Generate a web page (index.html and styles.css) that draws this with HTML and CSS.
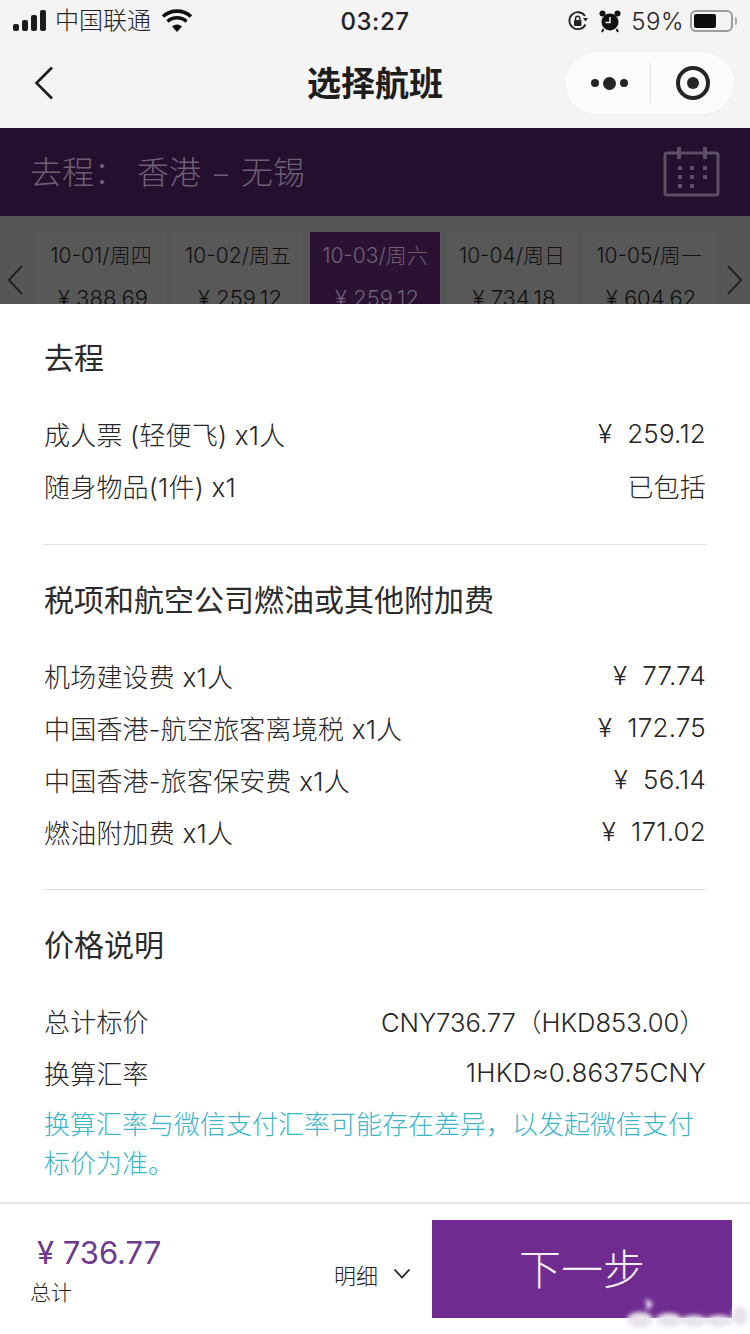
FILE: index.html
```html
<!DOCTYPE html>
<html lang="zh-CN">
<head>
<meta charset="utf-8">
<title>选择航班</title>
<link rel="stylesheet" href="styles.css">
</head>
<body>
<div class="app">
  <div class="top">
    <div class="status">
      <div class="status-left">
        <svg class="signal" width="34" height="22" viewBox="0 0 34 22"><rect x="0" y="14" width="6" height="7" rx="2"/><rect x="9" y="10" width="6" height="11" rx="2"/><rect x="18" y="5" width="6" height="16" rx="2"/><rect x="27" y="0" width="6" height="21" rx="2"/></svg>
        <span class="carrier">中国联通</span>
        <svg class="wifi" width="32" height="24" viewBox="0 0 32 24"><path d="M16 23 11 17.5a7.5 7.5 0 0 1 10 0Z" fill="#111"/><path d="M6.5 12.5a14 14 0 0 1 19 0M2 7.5a21 21 0 0 1 28 0" fill="none" stroke="#111" stroke-width="3.6"/></svg>
      </div>
      <div class="clock">03:27</div>
      <div class="status-right">
        <svg width="22" height="22" viewBox="0 0 22 22"><path d="M18.5 14.5A8.5 8.5 0 1 1 18 6" fill="none" stroke="#222" stroke-width="1.8"/><path d="M16 8h5l-2.5 3.4Z" fill="#222"/><rect x="7" y="10" width="7.5" height="6" rx="1" fill="#222"/><path d="M8.5 10V8.4a2.2 2.2 0 0 1 4.4 0V10" fill="none" stroke="#222" stroke-width="1.4"/></svg>
        <svg width="22" height="24" viewBox="0 0 22 24"><circle cx="11" cy="13" r="8.5" fill="#111"/><circle cx="3.5" cy="4.5" r="3" fill="#111"/><circle cx="18.5" cy="4.5" r="3" fill="#111"/><path d="M11 8v5.500H6.500" fill="none" stroke="#f4f4f4" stroke-width="1.5"/><path d="M4.500 20 3 23M17.500 20 19 23" stroke="#111" stroke-width="1.8"/></svg>
        <span class="percent">59%</span>
        <span class="battery"><span class="battery-fill"></span></span>
        <span class="battery-tip"></span>
      </div>
    </div>
    <div class="nav">
      <svg class="back" width="20" height="34" viewBox="0 0 20 34"><path d="M18 1.500 2.500 17 18 32.500" fill="none" stroke="#1c1c1c" stroke-width="2.600"/></svg>
      <h1 class="nav-title">选择航班</h1>
      <div class="capsule">
        <div class="capsule-more"><i class="dot"></i><i class="dot dot-big"></i><i class="dot"></i></div>
        <div class="capsule-line"></div>
        <div class="capsule-target"><i class="target-core"></i></div>
      </div>
    </div>
  </div>

  <div class="route">
    <div class="route-text"><span>去程：</span><span class="route-cities">香港</span><span class="route-dash">–</span><span>无锡</span></div>
    <svg width="58" height="52" viewBox="0 0 58 52" class="calendar"><rect x="2" y="7" width="53" height="42" rx="2" fill="none" stroke="#5d4f63" stroke-width="3"/><path d="M16 1v12M42 1v12" stroke="#5d4f63" stroke-width="4"/><g fill="#5d4f63"><rect x="15" y="20" width="4" height="4"/><rect x="27" y="20" width="4" height="4"/><rect x="40" y="20" width="4" height="4"/><rect x="15" y="29" width="4" height="4"/><rect x="27" y="29" width="4" height="4"/><rect x="40" y="29" width="4" height="4"/><rect x="15" y="38" width="4" height="4"/><rect x="27" y="38" width="4" height="4"/></g></svg>
  </div>

  <div class="dates">
    <svg class="date-arrow" width="16" height="30" viewBox="0 0 16 30"><path d="M15 1 2 15l13 14" fill="none" stroke="#1a1a1a" stroke-width="1.800"/></svg>
    <div class="date-list">
      <div class="date"><div class="date-day">10-01/周四</div><div class="date-price">¥ 388.69</div></div>
      <div class="date"><div class="date-day">10-02/周五</div><div class="date-price">¥ 259.12</div></div>
      <div class="date date-active"><div class="date-day">10-03/周六</div><div class="date-price">¥ 259.12</div></div>
      <div class="date"><div class="date-day">10-04/周日</div><div class="date-price">¥ 734.18</div></div>
      <div class="date"><div class="date-day">10-05/周一</div><div class="date-price">¥ 604.62</div></div>
    </div>
    <svg class="date-arrow" width="16" height="30" viewBox="0 0 16 30"><path d="M1 1l13 14L1 29" fill="none" stroke="#1a1a1a" stroke-width="1.800"/></svg>
  </div>

  <div class="sheet">
    <section class="group group-first">
      <h2 class="group-title">去程</h2>
      <div class="rows">
        <div class="row"><span>成人票 (轻便飞) x1人</span><span>¥&nbsp;&nbsp;259.12</span></div>
        <div class="row"><span>随身物品(1件) x1</span><span>已包括</span></div>
      </div>
    </section>
    <section class="group">
      <h2 class="group-title">税项和航空公司燃油或其他附加费</h2>
      <div class="rows">
        <div class="row"><span>机场建设费 x1人</span><span>¥&nbsp;&nbsp;77.74</span></div>
        <div class="row"><span>中国香港-航空旅客离境税 x1人</span><span>¥&nbsp;&nbsp;172.75</span></div>
        <div class="row"><span>中国香港-旅客保安费 x1人</span><span>¥&nbsp;&nbsp;56.14</span></div>
        <div class="row"><span>燃油附加费 x1人</span><span>¥&nbsp;&nbsp;171.02</span></div>
      </div>
    </section>
    <section class="group group-last">
      <h2 class="group-title">价格说明</h2>
      <div class="rows">
        <div class="row"><span>总计标价</span><span class="row-cny">CNY736.77（HKD853.00）</span></div>
        <div class="row"><span>换算汇率</span><span>1HKD≈0.86375CNY</span></div>
      </div>
      <p class="note">换算汇率与微信支付汇率可能存在差异，以发起微信支付标价为准。</p>
    </section>
  </div>

  <div class="footer">
    <div class="total">
      <div class="total-price">¥ 736.77</div>
      <div class="total-label">总计</div>
    </div>
    <div class="detail">
      <span>明细</span>
      <svg width="18" height="12" viewBox="0 0 18 12"><path d="M1.500 1.500 9 9.500l7.500-8" fill="none" stroke="#222" stroke-width="1.800"/></svg>
    </div>
    <div class="next">下一步</div>
  </div>
  <svg class="watermark" width="130" height="40" viewBox="0 0 130 40"><defs><filter id="soft"><feGaussianBlur stdDeviation="2.200"/></filter></defs><g fill="#e9e4ec" filter="url(#soft)"><ellipse cx="18" cy="25" rx="13" ry="8"/><path d="M24 3l7 6-6 7Z" fill="#f5e9f6"/><ellipse cx="47" cy="25" rx="13" ry="7"/><ellipse cx="72" cy="26" rx="13" ry="6"/><ellipse cx="97" cy="26" rx="13" ry="6"/><ellipse cx="118" cy="21" rx="8" ry="10"/></g></svg>
</div>
</body>
</html>
```
FILE: styles.css
```css
* { box-sizing: border-box; }
html, body { margin: 0; padding: 0; background: #fff; }
body { font-family: "Inter", "Noto Sans CJK SC", sans-serif; color: #262626; }
h1, h2, p { margin: 0; }
.app { position: relative; width: 750px; height: 1334px; overflow: hidden; display: flex; flex-direction: column; }

.top { height: 128px; background: #f4f4f4; }
.status { height: 42px; padding: 0 13px; display: flex; align-items: center; justify-content: space-between; position: relative; font-size: 24px; color: #222; }
.status-left { display: flex; align-items: center; }
.signal { fill: #1c1c1c; }
.carrier { margin: -5px 0 0 8px; font-family: "Noto Sans CJK SC", sans-serif; font-size: 24px; font-weight: 300; }
.wifi { margin-left: 10px; }
.clock { position: absolute; left: 0; right: 0; text-align: center; font-size: 24px; font-weight: 500; letter-spacing: 0.5px; pointer-events: none; }
.status-right { display: flex; align-items: center; gap: 10px; padding-right: 0; }
.percent { font-size: 24px; font-weight: 300; letter-spacing: 0.5px; }
.battery { width: 43px; height: 22px; margin-left: -4px; border: 2px solid #9b9b9b; border-radius: 6px; padding: 2px; display: flex; }
.battery-fill { width: 22px; background: #0d0d0d; border-radius: 2px; }
.battery-tip { width: 2px; height: 8px; margin-left: -8px; background: #aaa; border-radius: 0 2px 2px 0; }

.nav { height: 86px; position: relative; display: flex; align-items: center; justify-content: space-between; padding: 0 15px 4px 34px; }
.nav-title { position: absolute; left: 0; right: 0; top: 17px; text-align: center; font-family: "Noto Sans CJK SC", sans-serif; font-size: 34px; line-height: 46px; font-weight: 700; color: #1d1d1d; pointer-events: none; }
.capsule { width: 171px; height: 64px; border-radius: 32px; background: #fbfbfb; border: 1px solid #efefef; display: flex; align-items: center; }
.capsule-more { width: 85px; display: flex; justify-content: center; align-items: center; gap: 4px; padding-left: 3px; }
.dot { width: 8px; height: 8px; border-radius: 50%; background: #242424; }
.dot-big { width: 13px; height: 13px; }
.capsule-line { width: 1px; height: 40px; background: #e4e4e4; }
.capsule-target { width: 34px; height: 34px; margin-left: 25px; border: 4px solid #242424; border-radius: 50%; display: flex; align-items: center; justify-content: center; }
.target-core { width: 12px; height: 12px; border-radius: 50%; background: #242424; }

.route { height: 88px; background: #250f2e; padding: 0 29px 0 30px; display: flex; align-items: center; justify-content: space-between; }
.route-text { font-family: "Noto Sans CJK SC", sans-serif; font-size: 32px; line-height: 44px; font-weight: 300; color: #6e5f74; display: flex; margin-top: -4px; }
.route-cities { margin-left: 11px; }
.route-dash { width: 40px; text-align: center; }
.calendar { margin-top: 0; }

.dates { height: 88px; background: #565656; overflow: hidden; padding: 16px 7px 0; display: flex; align-items: flex-start; justify-content: space-between; }
.date-arrow { flex: none; margin-top: 33px; }
.date-list { display: flex; gap: 7px; }
.date { width: 130px; height: 90px; background: #585858; text-align: center; color: #111; padding-top: 10px; white-space: nowrap; }
.date-day { font-size: 21px; line-height: 28px; font-weight: 300; }
.date-price { font-size: 22px; line-height: 30px; margin-top: 13px; padding-left: 4px; font-weight: 300; }
.date-active { background: #2b1233; color: #6e5f74; }

.sheet { flex: 1; padding: 0 44px; background: #fff; min-height: 0; }
.group { padding: 30px 1px 31px; border-bottom: 1px solid #e2e2e2; margin: 0 -1px; }
.group-first { padding-top: 29px; padding-bottom: 32px; }
.group-last { border-bottom: 0; padding-top: 30px; padding-bottom: 0; }
.group-title { font-family: "Noto Sans CJK SC", sans-serif; font-size: 30px; line-height: 46px; font-weight: 400; color: #2b2b2b; margin-bottom: 29px; }
.row { height: 52px; padding-bottom: 2px; display: flex; justify-content: space-between; align-items: center; font-size: 26px; font-weight: 300; letter-spacing: 0.2px; white-space: nowrap; }
.row-cny { font-size: 25.6px; letter-spacing: 0; margin-right: 1px; }
.note { margin-top: 4px; font-family: "Noto Sans CJK SC", sans-serif; font-size: 26px; line-height: 39px; font-weight: 300; color: #3db5c9; }

.footer { height: 132px; flex: none; border-top: 2px solid #e6e6e6; background: #fff; display: flex; align-items: center; padding: 0 18px 0 30px; }
.total { width: 290px; }
.total-price { font-size: 31px; line-height: 38px; padding: 1px 0 0 7px; color: #6d3a8f; font-weight: 400; }
.total-label { font-family: "Noto Sans CJK SC", sans-serif; font-size: 21px; line-height: 30px; margin-top: 4px; font-weight: 300; color: #222; }
.detail { width: 112px; padding: 10px 0 0 14px; display: flex; align-items: center; gap: 15px; font-family: "Noto Sans CJK SC", sans-serif; font-size: 22px; font-weight: 300; color: #222; }
.next { width: 300px; height: 98px; background: #6f2b90; color: #f5eff7; font-family: "Noto Sans CJK SC", sans-serif; font-size: 42px; font-weight: 300; display: flex; align-items: center; justify-content: center; padding-bottom: 6px; }
.watermark { position: absolute; left: 622px; top: 1295px; }
```
